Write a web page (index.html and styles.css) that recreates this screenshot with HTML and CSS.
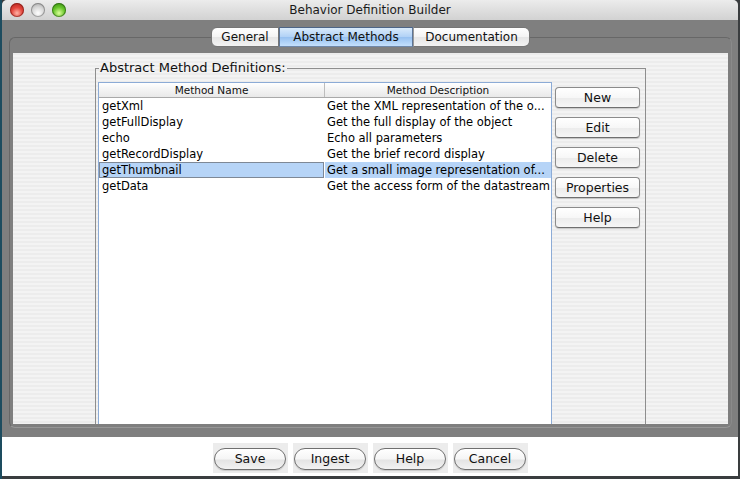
FILE: index.html
```html
<!DOCTYPE html>
<html>
<head>
<meta charset="utf-8">
<link rel="stylesheet" href="styles.css">
</head>
<body>
<div class="window">
  <div class="titlebar">
    <div class="lights">
      <span class="light red"></span>
      <span class="light off"></span>
      <span class="light green"></span>
    </div>
    <div class="title">Behavior Definition Builder</div>
    <div></div>
  </div>
  <div class="frame">
    <div class="pane">
      <div class="tabs">
        <span class="tab tab-general">General</span>
        <span class="tab tab-abstract sel">Abstract Methods</span>
        <span class="tab tab-doc">Documentation</span>
      </div>
      <div class="content">
        <fieldset class="group">
          <legend>Abstract Method Definitions:</legend>
          <div class="group-body">
            <div class="table">
              <div class="thead">
                <div class="th th-first">Method Name</div>
                <div class="th">Method Description</div>
              </div>
              <div class="row"><div class="cell">getXml</div><div class="cell cell2">Get the XML representation of the o...</div></div>
              <div class="row"><div class="cell">getFullDisplay</div><div class="cell cell2">Get the full display of the object</div></div>
              <div class="row"><div class="cell">echo</div><div class="cell cell2">Echo all parameters</div></div>
              <div class="row"><div class="cell">getRecordDisplay</div><div class="cell cell2">Get the brief record display</div></div>
              <div class="row selected"><div class="cell focus">getThumbnail</div><div class="cell cell2">Get a small image representation of...</div></div>
              <div class="row"><div class="cell">getData</div><div class="cell cell2">Get the access form of the datastream</div></div>
            </div>
            <div class="side-buttons">
              <button class="btn">New</button>
              <button class="btn">Edit</button>
              <button class="btn">Delete</button>
              <button class="btn">Properties</button>
              <button class="btn">Help</button>
            </div>
          </div>
        </fieldset>
      </div>
    </div>
  </div>
  <div class="footer">
    <div class="pill-box"><button class="pill">Save</button></div>
    <div class="pill-box"><button class="pill">Ingest</button></div>
    <div class="pill-box"><button class="pill">Help</button></div>
    <div class="pill-box"><button class="pill">Cancel</button></div>
  </div>
</div>
</body>
</html>
```
FILE: styles.css
```css
* { box-sizing: border-box; }
html, body {
  margin: 0;
  padding: 0;
}
body {
  width: 740px;
  height: 479px;
  overflow: hidden;
  background: linear-gradient(to right, #1d4c5f 0 2px, #3a3d3f 2px);
  font-family: "DejaVu Sans", "Noto Sans", sans-serif;
  color: #000;
}
.window {
  margin-left: 2px;
  width: 736px;
  height: 476px;
  display: flex;
  flex-direction: column;
  border-radius: 5px 5px 0 0;
  overflow: hidden;
  background: #7f7f7f;
}
.titlebar {
  height: 20px;
  flex: none;
  display: grid;
  grid-template-columns: 1fr auto 1fr;
  align-items: center;
  background: linear-gradient(#ececec, #dcdcdc 60%, #d2d2d2);
}
.lights {
  display: flex;
  gap: 7px;
  padding-left: 8px;
}
.light {
  width: 14px;
  height: 14px;
  border-radius: 50%;
  display: block;
}
.red {
  background: radial-gradient(circle at 50% 72%, #ffb3a6 0, #e4463d 45%, #a51b14 100%);
  box-shadow: inset 0 0 0 1px rgba(110, 20, 15, 0.55);
}
.off {
  background: radial-gradient(circle at 50% 72%, #ffffff 0, #d6d6d6 50%, #9a9a9a 100%);
  box-shadow: inset 0 0 0 1px rgba(90, 90, 90, 0.5);
}
.green {
  background: radial-gradient(circle at 50% 72%, #dcff9a 0, #66c42a 48%, #2f7d0c 100%);
  box-shadow: inset 0 0 0 1px rgba(30, 80, 10, 0.55);
}
.title {
  font-size: 12px;
  line-height: 20px;
  color: #1a1a1a;
}
.frame {
  flex: none;
  height: 417px;
  padding: 17px 6px 9px 7px;
}
.pane {
  width: 723px;
  height: 391px;
  border: 1px solid #676767;
  border-bottom-color: #979797;
  border-right-color: #8a8a8a;
  border-radius: 6px;
  padding: 0 3px 3px 3px;
  display: flex;
  flex-direction: column;
}
.tabs {
  margin-top: -11px;
  height: 20px;
  display: flex;
  justify-content: center;
}
.tab {
  height: 20px;
  font-size: 12px;
  line-height: 18px;
  text-align: center;
  border: 1px solid #767676;
  border-left: 1px solid #9a9a9a;
  background: linear-gradient(#ffffff, #f4f4f4 48%, #e6e6e6 52%, #f3f3f3);
  color: #111;
}
.tab-general {
  width: 68px;
  border-left-color: #767676;
  border-radius: 6px 0 0 6px;
}
.tab-abstract { width: 134px; }
.tab-doc {
  width: 117px;
  border-radius: 0 6px 6px 0;
}
.tab.sel {
  border-color: #4d6587 #5d7596 #6f88aa #5d7596;
  background: linear-gradient(#d9eafb, #b2d2f6 48%, #97c1f1 52%, #c4e0fc);
}
.content {
  margin-top: 6px;
  height: 371px;
  overflow: hidden;
  padding: 8px 0 0 82px;
  background: repeating-linear-gradient(to bottom, #ececec 0 2px, #f3f3f3 2px 4px);
}
.group {
  margin: 0;
  min-width: 0;
  width: 551px;
  height: 420px;
  border: 1px solid #8e8e8e;
  padding: 7px 4px 0 2px;
}
.group legend {
  font-size: 13px;
  line-height: 14px;
  padding: 0 1px;
  margin-left: 1px;
  color: #111;
}
.group-body {
  display: flex;
  align-items: flex-start;
}
.table {
  width: 454px;
  height: 360px;
  border: 1px solid #8cabd6;
  background: #fff;
  flex: none;
}
.thead {
  display: grid;
  grid-template-columns: 226px 1fr;
  height: 15px;
  border-bottom: 1px solid #a9a9a9;
  background: linear-gradient(#ffffff, #f3f3f3 50%, #e9e9e9);
}
.th {
  font-size: 10.5px;
  line-height: 14px;
  text-align: center;
  color: #111;
}
.th-first {
  border-right: 1px solid #bdbdbd;
}
.row {
  display: grid;
  grid-template-columns: 226px 1fr;
  height: 16px;
}
.cell {
  font-size: 11.5px;
  line-height: 16px;
  padding-left: 3px;
  white-space: nowrap;
  overflow: hidden;
  color: #000;
}
.cell2 { padding-left: 2px; }
.row.selected .cell {
  background: #b6d4f7;
}
.row.selected .focus {
  border: 1px solid #7e8896;
  padding-left: 2px;
  line-height: 14px;
  margin-right: 1px;
}
.side-buttons {
  margin-left: 3px;
  padding-top: 5px;
  width: 85px;
  display: flex;
  flex-direction: column;
  gap: 9px;
}
.btn {
  width: 85px;
  height: 21px;
  padding: 0;
  font-family: inherit;
  font-size: 12.5px;
  line-height: 19px;
  color: #111;
  border: 1px solid #8b8b8b;
  border-bottom-color: #6f6f6f;
  border-radius: 4px;
  background: linear-gradient(#ffffff, #f7f7f7 50%, #ececec 55%, #f6f6f6);
  box-shadow: 0 1px 1px rgba(0, 0, 0, 0.18);
}
.footer {
  flex: none;
  height: 39px;
  background: #fff;
  display: flex;
  justify-content: center;
  align-items: flex-start;
  padding-top: 6px;
  gap: 5px;
}
.pill-box {
  width: 75px;
  height: 30px;
  background: #ececec;
  display: flex;
  align-items: flex-start;
  justify-content: center;
  padding-top: 5px;
}
.pill {
  width: 72px;
  height: 22px;
  padding: 0;
  font-family: inherit;
  font-size: 12.5px;
  line-height: 20px;
  color: #111;
  border: 1px solid #6f6f6f;
  border-radius: 11px;
  background: linear-gradient(#ffffff, #f5f5f5 50%, #e4e4e4 55%, #f2f2f2);
  box-shadow: 0 1px 1px rgba(0, 0, 0, 0.15);
}
```
